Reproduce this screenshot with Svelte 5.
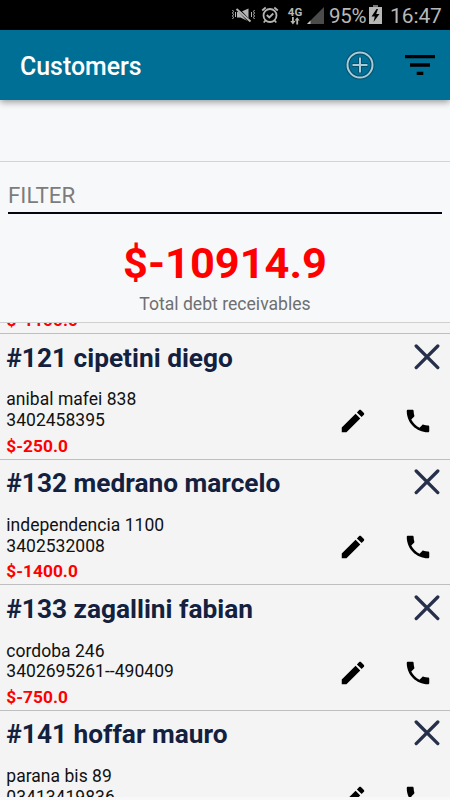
<script>
    // the list is scrolled, so the first and last entries are only partly on screen
    let customers = [
        { id: 121, name: 'cipetini diego', address: 'anibal mafei 838', phone: '3402458395', balance: '$-250.0' },
        { id: 132, name: 'medrano marcelo', address: 'independencia 1100', phone: '3402532008', balance: '$-1400.0' },
        { id: 133, name: 'zagallini fabian', address: 'cordoba 246', phone: '3402695261--490409', balance: '$-750.0' },
        { id: 141, name: 'hoffar mauro', address: 'parana bis 89', phone: '03413419836' }
    ];
    let total = '$-10914.9';
</script>

<div class="screen">
    <div class="status">
        <svg class="mute" width="25" height="18" viewBox="0 0 25 18" fill="none" stroke="#b4b4b4">
            <path d="M1.500 4l1 1.500-1 1.500 1 1.500-1 1.500 1 1.500-1 1.500M4.500 6v5M23.500 4l-1 1.500 1 1.500-1 1.500 1 1.500-1 1.500 1 1.500M20.500 6v5" />
            <path d="M6 6h3.500l8-3.500v13l-8-4H6z" fill="#b4b4b4" stroke="none" />
            <path d="M6 2l13 14" stroke="#000" stroke-width="3" />
            <path d="M5.500 3l14 12.500" stroke-width="2" />
        </svg>
        <svg class="alarm" width="18" height="18" viewBox="0 0 18 18" fill="none" stroke="#b4b4b4" stroke-width="1.800">
            <circle cx="9" cy="9.500" r="6.500" />
            <path d="M5.800 9l2.500 2.500 4-4M1.200 4.500l3.500-3M16.800 4.500l-3.500-3M4.500 14.500l-1.800 2M13.500 14.500l1.800 2" />
        </svg>
        <div class="network">
            <span>4G</span>
            <svg width="10" height="8" viewBox="0 0 10 8" fill="#b4b4b4">
                <path d="M2 0h1.800v4h1.700L2.900 7.500.3 4H2zM6.300 7.500h1.800v-4h1.600L7.200.2 4.600 3.500h1.700z" />
            </svg>
        </div>
        <svg class="signal" width="17" height="17" viewBox="0 0 17 17">
            <path d="M17 0v17H0z" fill="#4b4b4b" />
            <path d="M3.500 13.500V17H0z" fill="#c4c4c4" />
        </svg>
        <span class="percent">95%</span>
        <svg class="battery" width="13" height="19" viewBox="0 0 13 19">
            <path d="M4 0h5v2h-5z" fill="#777" />
            <path d="M0 2h13v17H0z" fill="#b8b8b8" />
            <path d="M7.500 4L2.500 11.500h3.300L4.500 17l6-8H7.200L9 4z" fill="#000" />
        </svg>
        <span class="clock">16:47</span>
    </div>

    <header>
        <h1>Customers</h1>
        <button aria-label="Add customer">
            <svg width="30" height="30" viewBox="0 0 30 30" fill="none">
                <g stroke="#064e69" stroke-width="4">
                    <circle cx="15" cy="15" r="12.500" />
                    <path d="M15 7v16M7 15h16" />
                </g>
                <g stroke="#a7cbd8" stroke-width="2">
                    <circle cx="15" cy="15" r="12.500" />
                    <path d="M15 7.500v15M7.500 15h15" />
                </g>
            </svg>
        </button>
        <button class="sort" aria-label="Sort">
            <svg width="30" height="20" viewBox="0 0 30 20">
                <path d="M0 0h30v3.300H0zM5 8.300h20v3.400H5zM11.700 16.700h6.600V20h-6.600z" />
            </svg>
        </button>
    </header>

    <div class="blank"></div>

    <section class="summary">
        <input type="text" placeholder="FILTER" />
        <div class="total">{total}</div>
        <div class="caption">Total debt receivables</div>
    </section>

    <div class="list">
        <div class="previous">$-1100.0</div>
        {#each customers as customer (customer.id)}
            <article>
                <h2>#{customer.id} {customer.name}</h2>
                <button class="remove" aria-label="Remove">
                    <svg width="26" height="26" viewBox="0 0 26 26" fill="none" stroke="#26304a" stroke-width="3.300" stroke-linecap="round">
                        <path d="M2.200 2l21.600 21.600M23.800 2L2.200 23.600" />
                    </svg>
                </button>
                <div class="details">
                    <div>{customer.address}</div>
                    <div>{customer.phone}</div>
                    {#if customer.balance}
                        <div class="balance">{customer.balance}</div>
                    {/if}
                </div>
                <div class="actions">
                    <button aria-label="Edit">
                        <svg width="30" height="30" viewBox="0 0 24 24">
                            <path d="M3 17.250V21h3.750L17.810 9.940l-3.750-3.750L3 17.250zM20.710 7.040c.39-.39.39-1.020 0-1.410l-2.340-2.340c-.39-.39-1.020-.39-1.410 0l-1.830 1.830 3.750 3.750 1.830-1.830z" />
                        </svg>
                    </button>
                    <button aria-label="Call">
                        <svg width="30" height="30" viewBox="0 0 24 24">
                            <path d="M6.620 10.790c1.440 2.830 3.760 5.140 6.590 6.590l2.200-2.200c.27-.27.67-.36 1.020-.24 1.120.37 2.330.57 3.570.57.55 0 1 .45 1 1V20c0 .55-.45 1-1 1-9.390 0-17-7.610-17-17 0-.55.45-1 1-1h3.500c.55 0 1 .45 1 1 0 1.250.2 2.450.57 3.570.11.35.03.74-.25 1.020l-2.200 2.200z" />
                        </svg>
                    </button>
                </div>
            </article>
        {/each}
    </div>
</div>

<style>
    :global(body) {
        margin: 0;
        overflow: hidden;
    }

    .screen {
        display: flex;
        flex-direction: column;
        width: 450px;
        height: 800px;
        overflow: hidden;
        background: #f7f8fa;
        font-family: Roboto, sans-serif;
    }

    button {
        display: flex;
        padding: 0;
        border: none;
        background: none;
        cursor: pointer;
    }

    svg {
        display: block;
        flex: none;
    }

    .status {
        flex: none;
        display: flex;
        height: 30px;
        padding-left: 231px;
        background: #000;
        color: #b8b8b8;
        font-size: 21px;
        line-height: 32px;
    }

    .mute {
        margin-top: 6px;
    }

    .alarm {
        margin: 6px 0 0 5px;
    }

    .network {
        display: flex;
        flex-direction: column;
        align-items: center;
        width: 16px;
        margin: 7px 0 0 8px;
        font-size: 11.500px;
        font-weight: 700;
        line-height: 10px;
    }

    .signal {
        margin: 7px 0 0 4px;
    }

    .percent {
        width: 40px;
        margin-left: 5px;
        font-size: 20.500px;
        letter-spacing: -0.3px;
    }

    .battery {
        margin-top: 5px;
    }

    .clock {
        margin-left: 8px;
        letter-spacing: -0.1px;
    }

    header {
        position: relative;
        flex: none;
        display: flex;
        align-items: center;
        height: 70px;
        padding: 0 15px 0 20px;
        background: #006f95;
        box-shadow: 0 2px 7px rgba(0, 0, 0, 0.4);
    }

    h1 {
        flex: 1;
        margin: 2px 0 0;
        color: #fff;
        font-size: 24.900px;
        font-weight: 500;
    }

    .sort {
        margin-left: 30px;
    }

    .blank {
        flex: none;
        height: 61px;
        border-bottom: 1px solid #d3d4d6;
    }

    .summary {
        flex: none;
        box-sizing: border-box;
        height: 161px;
        padding: 18px 8px 0;
        border-bottom: 1px solid #d0d0d1;
        text-align: center;
    }

    input {
        display: block;
        box-sizing: border-box;
        width: 100%;
        height: 34px;
        padding: 0 0 2px;
        border: none;
        border-bottom: 2px solid #05050f;
        background: none;
        font-family: inherit;
        font-size: 22.300px;
    }

    input::placeholder {
        color: #7c7c7d;
    }

    .total {
        margin-top: 24px;
        color: #f00;
        font-size: 43.400px;
        font-weight: 700;
        line-height: 52px;
    }

    .caption {
        margin-top: 4px;
        color: #6e6f70;
        font-size: 17.600px;
        line-height: 21px;
    }

    .list {
        flex: none;
        height: 474px;
        overflow: hidden;
        background: #f4f4f4;
        color: #111;
        font-size: 17.500px;
        line-height: 20.700px;
    }

    .previous {
        height: 20px;
        margin-top: -10px;
        padding-left: 6.500px;
        color: #f00;
        font-size: 17.300px;
        font-weight: 700;
        line-height: 15px;
    }

    article {
        display: grid;
        grid-template: 55px 70.670px / 1fr auto;
        box-sizing: border-box;
        height: 125.670px;
        padding: 0 9.500px 0 6.300px;
        border-top: 1px solid #bfbfbf;
    }

    h2 {
        margin: 8.500px 0 0;
        color: #13213f;
        font-size: 26.250px;
        font-weight: 700;
        line-height: 31px;
    }

    .remove {
        justify-self: end;
        align-self: start;
        margin: 9.500px 0.5px 0 0;
    }

    .details {
        padding-top: 0.3px;
        letter-spacing: 0.03px;
    }

    .balance {
        margin-top: 5px;
        color: #f00;
        font-size: 17.300px;
        font-weight: 700;
    }

    .actions {
        display: flex;
        gap: 34.500px;
        height: 30px;
        margin: 17.300px 7.800px 0 0;
    }
</style>
